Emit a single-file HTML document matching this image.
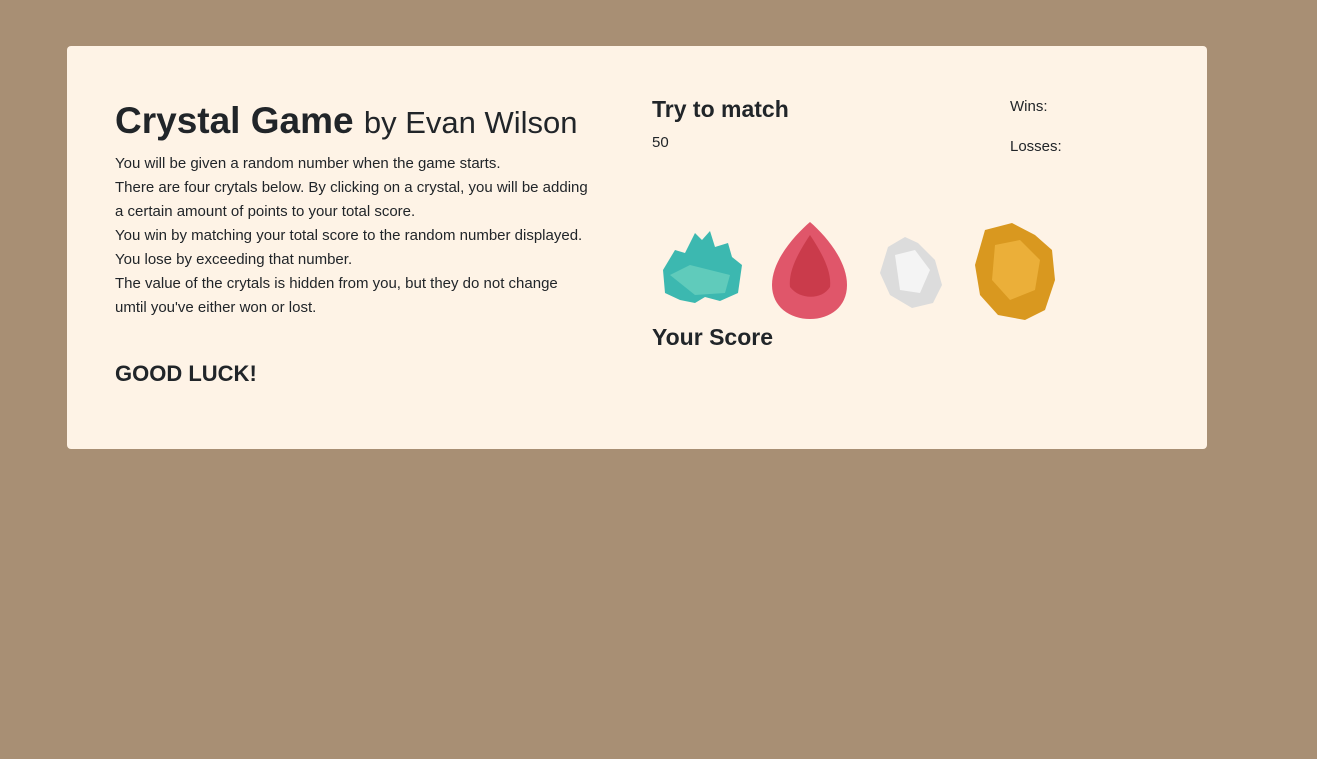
<!DOCTYPE html>
<html><head><style>
body{margin:0;width:1317px;height:759px;background:#a88f74;font-family:"Liberation Sans",sans-serif;color:#212529;position:relative;overflow:hidden}
.card{position:absolute;left:67px;top:46px;width:1140px;height:403px;background:#fef3e6;border-radius:4px}
.a{position:absolute;white-space:nowrap}
p{margin:0}
</style></head><body>
<div class="card"></div>
<div class="a" style="left:115px;top:98px;font-size:37px;line-height:46px"><b>Crystal Game</b> <span style="font-size:31px">by Evan Wilson</span></div>
<div class="a" style="left:115px;top:152px;font-size:15px;line-height:24px">
<p>You will be given a random number when the game starts.</p>
<p>There are four crytals below. By clicking on a crystal, you will be adding</p>
<p>a certain amount of points to your total score.</p>
<p>You win by matching your total score to the random number displayed.</p>
<p>You lose by exceeding that number.</p>
<p>The value of the crytals is hidden from you, but they do not change</p>
<p>umtil you've either won or lost.</p></div>
<div class="a" style="left:115px;top:361px;font-size:22px;font-weight:bold">GOOD LUCK!</div>
<div class="a" style="left:652px;top:96px;font-size:23px;font-weight:bold">Try to match</div>
<div class="a" style="left:652px;top:134px;font-size:15px">50</div>
<div class="a" style="left:1010px;top:98px;font-size:15px">Wins:</div>
<div class="a" style="left:1010px;top:138px;font-size:15px">Losses:</div>
<div class="a" style="left:652px;top:324px;font-size:23px;font-weight:bold">Your Score</div>
<svg class="a" style="left:650px;top:215px" width="420" height="115">
<path d="M13 55 L25 35 L35 38 L45 18 L52 25 L60 16 L65 32 L78 28 L82 42 L92 50 L88 78 L70 86 L55 82 L45 88 L30 85 L15 78 Z" fill="#3cb8b0"/>
<path d="M20 60 L40 50 L60 55 L80 60 L75 78 L45 80 Z" fill="#6fd3c0" opacity=".7"/>
<path d="M160 7 C145 20 122 45 122 70 C122 92 140 104 160 104 C180 104 197 92 197 70 C197 45 175 20 160 7 Z" fill="#e0566a"/>
<path d="M160 20 C150 35 138 55 140 72 C150 85 172 85 180 72 C182 55 170 35 160 20Z" fill="#c0303f" opacity=".7"/>
<path d="M238 32 L255 22 L268 28 L285 45 L292 70 L283 88 L262 93 L240 80 L230 58 Z" fill="#dcdcdc"/>
<path d="M245 40 L265 35 L280 55 L270 78 L250 75 Z" fill="#f4f4f4"/>
<path d="M335 15 L362 8 L385 20 L402 35 L405 65 L395 95 L375 105 L348 100 L330 80 L325 50 Z" fill="#d9981f"/>
<path d="M345 30 L370 25 L390 45 L385 75 L360 85 L342 65 Z" fill="#efb540" opacity=".8"/>
</svg>
</body></html>
